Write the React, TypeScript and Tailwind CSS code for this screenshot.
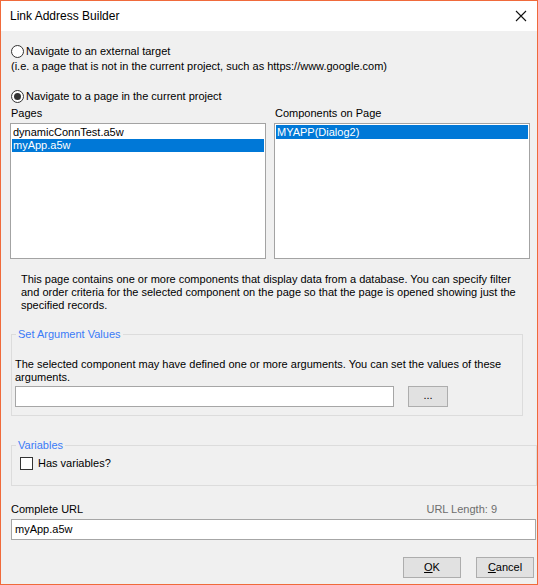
import React from "react";

const font = { fontFamily: '"Liberation Sans", Arial, sans-serif' };

const Radio = ({ checked }: { checked?: boolean }) => (
    <span className="w-[13px] h-[13px] rounded-full border border-[#333] bg-white flex items-center justify-center shrink-0">
        {checked && <span className="w-[7px] h-[7px] rounded-full bg-[#333]" />}
    </span>
);

// group box: border + legend sitting on the top line
const GroupBox = ({ title, className, children }: { title: string; className: string; children: React.ReactNode }) => (
    <div className={`relative border border-[#dcdcdc] ${className}`}>
        <span className="absolute top-[-7px] left-[4px] px-[2px] bg-[#f0f0f0] text-[#3b7bf7] leading-[13px]">{title}</span>
        {children}
    </div>
);

const App = () => {
    return (
        <div
            className="w-[538px] h-[585px] border border-[#f06a3b] bg-[#f0f0f0] flex flex-col text-[11px] text-black leading-[13px] overflow-hidden"
            style={font}
        >
            {/* Title bar */}
            <div className="h-[30px] bg-white flex items-center justify-between pl-[9px] pr-[9px] shrink-0">
                <span className="text-[12px]">Link Address Builder</span>
                <svg width="12" height="12" viewBox="0 0 12 12" className="mr-[1px]">
                    <path d="M1 1 L11 11 M11 1 L1 11" stroke="#111" strokeWidth="1.1" />
                </svg>
            </div>

            <div className="flex flex-col">
                {/* External target */}
                <div className="mt-[13px] ml-[10px] h-[15px] flex items-center gap-[2px]">
                    <Radio />
                    <span>Navigate to an external target</span>
                </div>
                <div className="ml-[10px] h-[15px] flex items-center">
                    (i.e. a page that is not in the current project, such as https://www.google.com)
                </div>

                {/* Project page */}
                <div className="mt-[15px] ml-[10px] h-[15px] flex items-center gap-[2px]">
                    <Radio checked />
                    <span>Navigate to a page in the current project</span>
                </div>

                <div className="mt-[2px] ml-[10px] h-[15px] flex">
                    <div className="w-[264px] flex items-center">Pages</div>
                    <div className="flex items-center">Components on Page</div>
                </div>

                <div className="mt-[2px] ml-[9px] flex gap-[8px]">
                    <div className="w-[256px] h-[136px] bg-white border border-[#a3a3a3] p-[1px]">
                        <div className="h-[14px] px-[1px] flex items-center">dynamicConnTest.a5w</div>
                        <div className="h-[13px] px-[1px] flex items-center bg-[#0078d7] text-white">myApp.a5w</div>
                    </div>
                    <div className="w-[256px] h-[136px] bg-white border border-[#a3a3a3] p-[1px]">
                        <div className="h-[14px] px-[1px] flex items-center bg-[#0078d7] text-white">MYAPP(Dialog2)</div>
                    </div>
                </div>

                {/* Description */}
                <p className="mt-[14px] ml-[20px] h-[39px] leading-[13px]">
                    This page contains one or more components that display data from a database. You can specify filter
                    <br />
                    and order criteria for the selected component on the page so that the page is opened showing just the
                    <br />
                    specified records.
                </p>

                {/* Set Argument Values */}
                <GroupBox title="Set Argument Values" className="mt-[22px] ml-[10px] w-[512px] h-[82px] pt-[23px] pl-[3px]">
                    <div className="leading-[13px]">
                        The selected component may have defined one or more arguments. You can set the values of these
                        <br />
                        arguments.
                    </div>
                    <div className="mt-[2px] flex gap-[14px]">
                        <div className="w-[379px] h-[21px] bg-white border border-[#a6a6a6]" />
                        <button className="w-[40px] h-[21px] bg-[#e1e1e1] border border-[#adadad] flex items-center justify-center pb-[2px]">
                            ...
                        </button>
                    </div>
                </GroupBox>

                {/* Variables */}
                <GroupBox title="Variables" className="mt-[29px] ml-[10px] w-[526px] h-[41px] pt-[11px] pl-[8px]">
                    <div className="flex items-center gap-[5px]">
                        <span className="w-[13px] h-[13px] border border-[#333] bg-white" />
                        <span>Has variables?</span>
                    </div>
                </GroupBox>

                {/* Complete URL */}
                <div className="mt-[16px] ml-[10px] w-[486px] h-[15px] flex items-center justify-between">
                    <span>Complete URL</span>
                    <span className="text-[#6d6d6d]">URL Length: 9</span>
                </div>
                <div className="mt-[2px] ml-[10px] w-[525px] h-[21px] bg-white border border-[#a6a6a6] flex items-center pl-[3px]">
                    myApp.a5w
                </div>

                {/* Buttons */}
                <div className="mt-[17px] flex justify-end gap-[15px] pr-[3px]">
                    <button className="w-[58px] h-[21px] bg-[#e1e1e1] border border-[#adadad] flex items-center justify-center">
                        <span><span className="underline">O</span>K</span>
                    </button>
                    <button className="w-[58px] h-[21px] bg-[#e1e1e1] border border-[#adadad] flex items-center justify-center">
                        <span><span className="underline">C</span>ancel</span>
                    </button>
                </div>
            </div>
        </div>
    );
};

export default App;
